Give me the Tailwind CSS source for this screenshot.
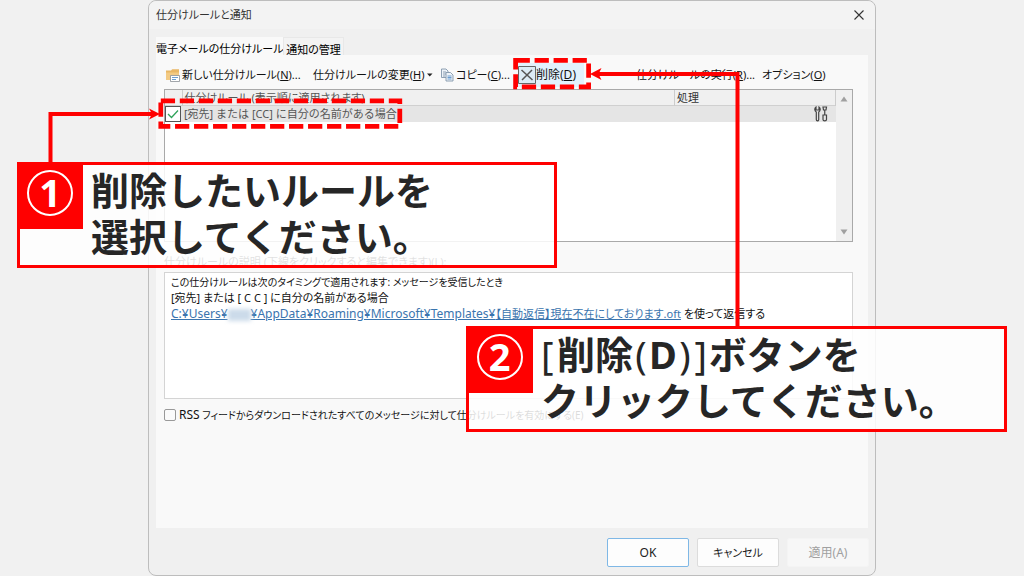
<!DOCTYPE html>
<html lang="ja">
  <head>
    <meta charset="UTF-8" />
    <meta name="viewport" content="width=device-width, initial-scale=1.0" />
    <script src="https://cdn.jsdelivr.net/npm/@tailwindcss/browser@4"></script>
    <title>仕分けルールと通知</title>
  </head>
  <body class="overflow-hidden bg-[#f1f1f1] font-['Noto_Sans','Noto_Sans_CJK_JP',sans-serif] text-[11px] leading-4 text-[#333]">
    <div class="relative mx-auto w-full max-w-[728px]">
      <!-- dialog -->
      <main class="flex min-h-screen flex-col rounded-lg border border-[#bdbdbd] bg-[#f0f0f0] [font-feature-settings:'palt']">
        <header class="flex h-7 items-center justify-between rounded-t-lg bg-[#f3f3f3] pr-2.5 pl-[7px]">
          <h1>仕分けルールと通知</h1>
          <button type="button" aria-label="閉じる">
            <svg class="size-3" viewBox="0 0 12 12" fill="none" stroke="#333" stroke-width="1.1">
              <path d="M1.5 1.5l9 9M10.5 1.5l-9 9" />
            </svg>
          </button>
        </header>

        <div class="mt-2 flex px-[7px] whitespace-nowrap text-black" role="tablist">
          <button type="button" role="tab" aria-selected="true" class="h-[18px] w-[127px] bg-[#f9f9f9] pt-1 leading-4">電子メールの仕分けルール</button>
          <button type="button" role="tab" aria-selected="false" class="h-[18px] w-[61px] border border-b-0 border-[#e8e8e8] bg-[#f3f3f3] pt-1 leading-4">通知の管理</button>
        </div>

        <section class="mx-[7px] flex-1 bg-[#f9f9f9] pr-[15px] pl-2">
          <!-- toolbar -->
          <div class="flex h-[34px] items-center pt-1.5 pl-0.5 whitespace-nowrap text-[#111]">
            <button type="button" class="flex w-[147px] items-center gap-0.5">
              <svg class="size-3.5 shrink-0" viewBox="0 0 14 14">
                <path d="M0 2.500h5l1.200-1.300H13V12H0z" fill="#e9b765" />
                <path d="M0 4.500h13V12H0z" fill="#f3ca83" />
                <path d="M4.500 7.500h9v6h-9z" fill="#fff" stroke="#8a8f96" stroke-width=".8" />
                <path d="M6 9.500h6M6 11.500h4" stroke="#5b93c9" stroke-width=".9" />
              </svg>
              <span>新しい仕分けルール(<u>N</u>)...</span>
            </button>
            <button type="button" class="flex w-[127px] items-center gap-0.5">
              <span>仕分けルールの変更(<u>H</u>)</span>
              <svg class="h-1 w-1.5" viewBox="0 0 6 4"><path d="M0 .5h5.500L2.750 3.500z" fill="#222" /></svg>
            </button>
            <button type="button" class="flex w-[78px] items-center gap-0.5">
              <svg class="size-3.5 shrink-0" viewBox="0 0 14 14" fill="#eef3f8" stroke="#8296aa" stroke-width=".9">
                <path d="M1.500 1h4.500l2 2v6.500H1.500z" />
                <path d="M3 4h3M3 6h3M3 8h2" />
                <path d="M6 4.500h4.500l2.500 2.500v6H6z" />
                <path d="M7.500 8h4M7.500 9.500h4M7.500 11h4" stroke="#5b93c9" />
              </svg>
              <span>コピー(<u>C</u>)...</span>
            </button>
            <button type="button" class="flex h-6 w-[66px] items-center bg-[#e2f1fc] text-[12px]">
              <svg class="h-[18px] w-[18px] shrink-0" viewBox="0 0 18 18" fill="none">
                <path d="M.5.5h17v17H.5z" stroke="#666" fill="#dcebf5" />
                <path d="M3.500 4l11 10M14 4L4 14" stroke="#555" stroke-width="1.500" />
              </svg>
              <span>削除(<u>D</u>)</span>
            </button>
            <button type="button" class="ml-auto w-[126px] text-left">仕分けルールの実行(<u>R</u>)...</button>
            <button type="button" class="w-[91px] text-left">オプション(<u>O</u>)</button>
          </div>

          <!-- rule list -->
          <div class="flex h-[153px] border border-[#a9a9a9] bg-white">
            <div class="flex-1">
              <table class="w-full table-fixed border-collapse">
                <thead>
                  <tr class="border-b border-[#d0d0d0] bg-[#f0f0f0] text-left">
                    <th class="w-[17px] border-r border-[#ccc] p-0" aria-label="有効"></th>
                    <th class="p-0 pl-0.5 leading-[15px] font-normal text-[#555]">仕分けルール (表示順に適用されます)</th>
                    <th class="w-[161px] border-x border-[#ccc] p-0 pl-0.5 leading-[15px] font-normal">処理</th>
                  </tr>
                </thead>
                <tbody>
                  <tr class="h-4 bg-[#e5e5e5]">
                    <td class="relative p-0">
                      <input id="rule" type="checkbox" checked class="absolute top-0 left-0 size-4 appearance-none border border-[#555] bg-white" />
                      <svg class="pointer-events-none absolute top-0 left-0 size-4" viewBox="0 0 16 16" fill="none" stroke="#2fa35a" stroke-width="1.300"><path d="M3 8l3.500 3.500L13 4.500" /></svg>
                    </td>
                    <td class="p-0 pl-0.5 leading-4 text-[#555] [font-feature-settings:normal]">
                      <label for="rule">[宛先] または [CC] に自分の名前がある場合</label>
                    </td>
                    <td class="p-0">
                      <svg class="mr-2 ml-auto h-4 w-3.5" viewBox="0 0 14 16" fill="none" stroke="#444" stroke-width="1.200">
                        <path d="M2 1C.3 2 .4 5 2.300 6v7.500c0 1.800 2.400 1.800 2.400 0V6C6.600 5 6.700 2 5 1v3H2z" />
                        <path d="M9 1h3.500l-.5 3h-2.500zM10.750 4v5M9 9h3.500v4.500c0 1.800-3.500 1.800-3.500 0z" />
                      </svg>
                    </td>
                  </tr>
                </tbody>
              </table>
            </div>
            <div class="flex w-4 flex-col items-center justify-between bg-[#f0f0f0] py-1.5">
              <svg class="h-1.5 w-2" viewBox="0 0 8 6"><path d="M4 .5L7.500 5.500h-7z" fill="#a0a0a0" /></svg>
              <svg class="h-1.5 w-2" viewBox="0 0 8 6"><path d="M4 5.500L7.500.5h-7z" fill="#a0a0a0" /></svg>
            </div>
          </div>

          <p class="pt-3 pb-0.5">仕分けルールの説明 (下線をクリックすると編集できます)(<u>L</u>):</p>
          <div class="h-[127px] border border-[#d4d4d4] bg-white px-1.5 py-px whitespace-nowrap text-[#111]">
            <p class="text-[10px] leading-4">この仕分けルールは次のタイミングで適用されます: メッセージを受信したとき</p>
            <p>[宛先] または [ C C ] に自分の名前がある場合</p>
            <p><a href="#" class="text-[#3a74ae] underline"><span class="text-[12px]">C:¥Users¥<span class="inline-block h-3 w-[23px] bg-[#ccdbea] align-middle blur-[2px]"></span>¥AppData¥Roaming¥Microsoft¥Templates¥</span>【自動返信】現在不在にしております.oft</a> を使って返信する</p>
          </div>

          <div class="mt-2 flex items-center gap-[3px] text-[10px] whitespace-nowrap text-[#111]">
            <input id="rss" type="checkbox" class="size-3 appearance-none rounded-xs border border-[#999] bg-[#fbfbfb]" />
            <label for="rss"><span class="text-[12px]">RSS</span> フィードからダウンロードされたすべてのメッセージに対して仕分けルールを有効にする(E)</label>
          </div>
        </section>

        <footer class="flex justify-end gap-2 px-1.5 pt-2.5 pb-2 text-[12px]">
          <button type="button" class="h-[29px] w-[82px] rounded-xs border border-[#7fb8e6] bg-[#fdfdfd] text-[#222]">OK</button>
          <button type="button" class="h-[29px] w-[82px] rounded-xs border border-[#dcdcdc] bg-[#fdfdfd] text-[11px] text-[#222]">キャンセル</button>
          <button type="button" disabled class="h-[29px] w-[82px] rounded-xs border border-[#f4f4f4] bg-[#f7f7f7] text-[#a0a0a0]">適用(A)</button>
        </footer>
      </main>

      <!-- connectors and dashed frames -->
      <svg class="pointer-events-none absolute top-0 -left-[148px] h-[576px] w-[1024px] max-w-none" viewBox="0 0 1024 576" fill="none" stroke="#f00">
        <rect x="160.800" y="100.800" width="239" height="25.500" stroke-width="4.750" stroke-dasharray="14.250 4.750" />
        <rect x="515.600" y="60.400" width="73" height="26.500" stroke-width="4.750" stroke-dasharray="14.250 4.750" />
        <path d="M50.500 164V114H152M737.500 328V74H598" stroke-width="4" />
        <path d="M160 114l-11-5.500 3 5.500-3 5.500zM590 74l11.500-6-3 6 3 6z" fill="#f00" stroke="none" />
      </svg>

      <!-- step 1 -->
      <div class="absolute top-[162px] -left-[131px] flex h-[106px] w-[540px] border-[3px] border-[#f00] bg-white/85">
        <div class="-mt-[3px] -ml-[3px] flex h-[67px] w-[66px] justify-center bg-[#f00] pt-2">
          <span class="size-[46px] rounded-full border-2 border-white text-center font-['Open_Sans'] text-[38px] leading-[40px] font-bold text-white">1</span>
        </div>
        <p class="pt-0.5 pl-2 text-[38px] leading-[46px] font-bold whitespace-nowrap text-[#262626]">削除したいルールを<br />選択してください。</p>
      </div>

      <!-- step 2 -->
      <div class="absolute top-[326px] left-[318px] flex h-[106px] w-[541px] border-[3px] border-[#f00] bg-white/85">
        <div class="-mt-[3px] -ml-[3px] flex h-[67px] w-[67px] justify-center bg-[#f00] pt-2">
          <span class="size-[46px] rounded-full border-2 border-white text-center font-['Open_Sans'] text-[38px] leading-[40px] font-bold text-white">2</span>
        </div>
        <p class="pt-0.5 pl-2 text-[38px] leading-[46px] font-bold whitespace-nowrap text-[#262626]"><span class="inline-block w-4 font-normal">[</span>削除<span class="inline-block w-4 text-center font-normal">(</span>D<span class="inline-block w-4 text-center font-normal">)</span><span class="inline-block w-4 text-center font-normal">]</span>ボタンを<br />クリックしてください。</p>
      </div>
    </div>
  </body>
</html>
